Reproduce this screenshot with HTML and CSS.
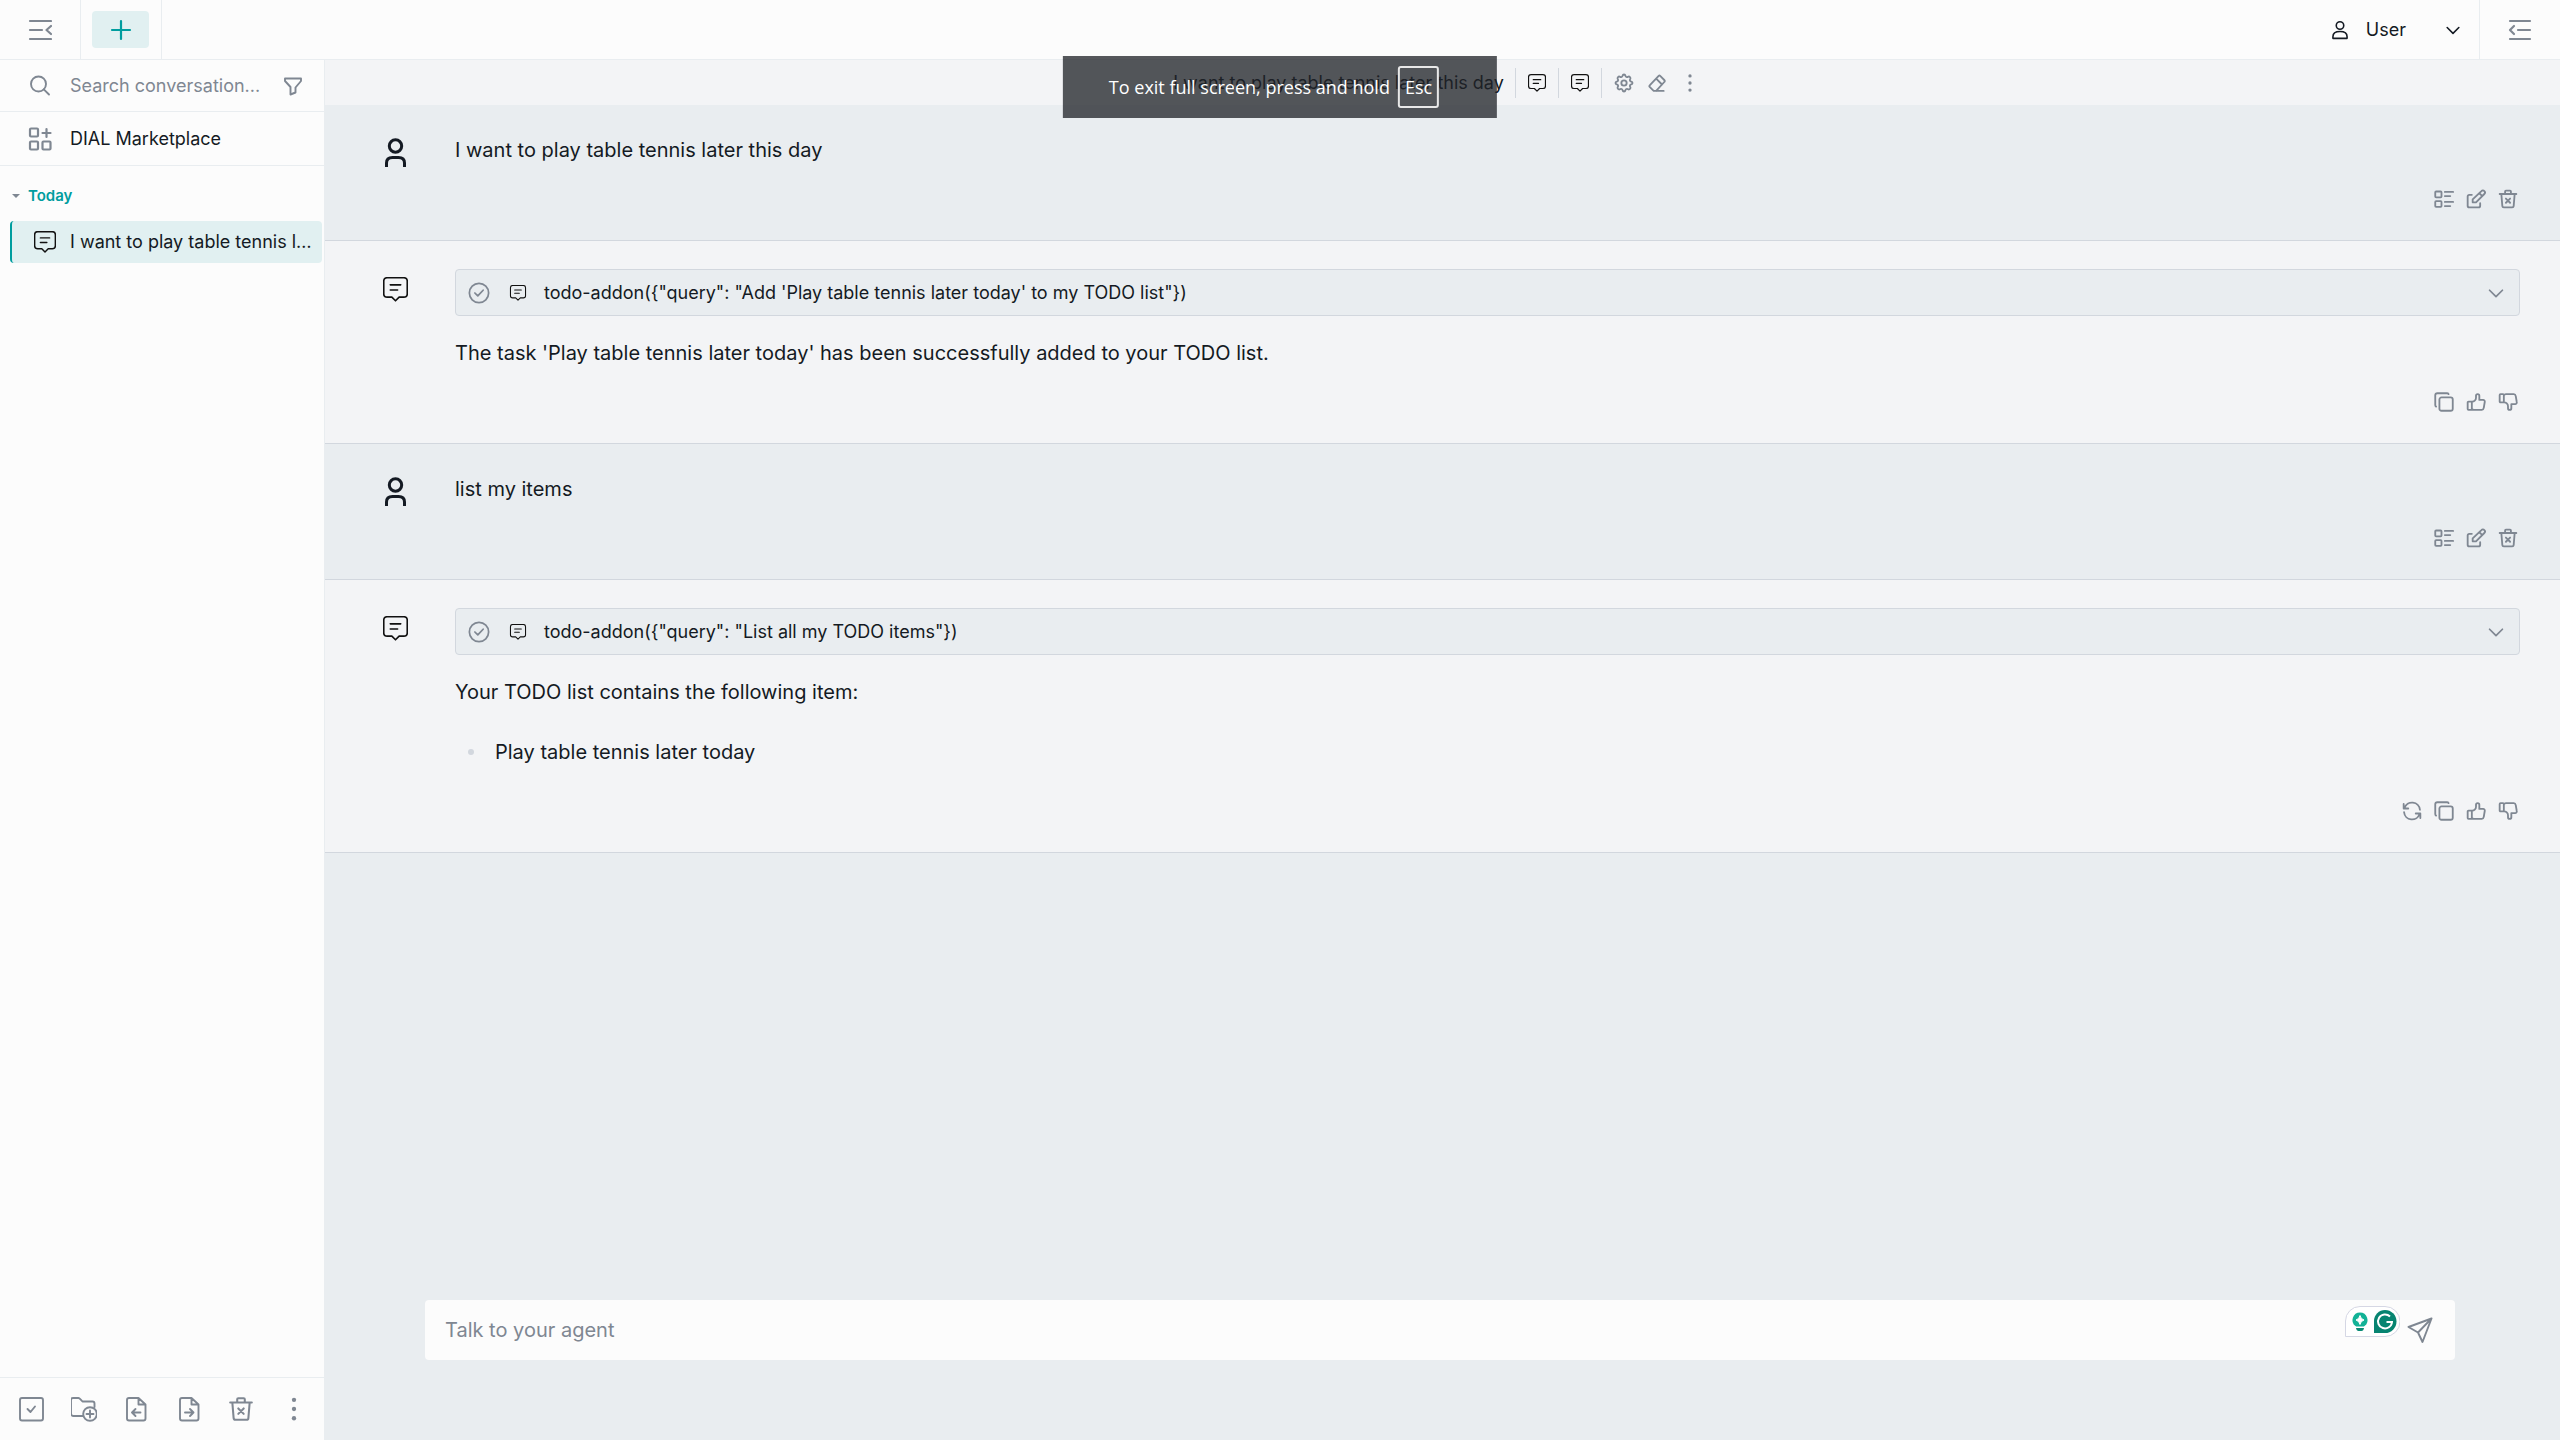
FILE: index.html
```html
<!DOCTYPE html>
<html lang="en">
<head>
<meta charset="utf-8">
<meta name="viewport" content="width=device-width, initial-scale=1">
<title>DIAL chat</title>
<link rel="stylesheet" href="styles.css">
</head>
<body>
<svg class="sprite" aria-hidden="true">
  <symbol id="menu-close" viewBox="0 0 24 24"><path d="M2 3H23M2 12H14M2 21H23M23 8L18.500 12L23 16"/></symbol>
  <symbol id="menu-open" viewBox="0 0 24 24"><path d="M2 3H22M10 12H22M2 21H22M6 8L2 12L6 16"/></symbol>
  <symbol id="plus" viewBox="0 0 24 24"><path d="M12 3V21M3 12H21"/></symbol>
  <symbol id="search" viewBox="0 0 24 24"><circle cx="10.500" cy="10" r="7.500"/><path d="M15.800 15.300L21 20.500"/></symbol>
  <symbol id="filter" viewBox="0 0 24 24"><path d="M4 4.500H20V7L14.500 13.500V18.500L9.500 20.500V13L4 7Z"/></symbol>
  <symbol id="apps" viewBox="0 0 24 24"><rect x="2" y="1.500" width="8" height="8" rx="1"/><rect x="2" y="14.500" width="8" height="8" rx="1"/><rect x="14.500" y="14.500" width="8" height="8" rx="1"/><path d="M18.500 2V10M14.500 6H22.500"/></symbol>
  <symbol id="bot" viewBox="0 0 24 24"><path d="M4 .700H20Q23.300 .700 23.300 4V16Q23.300 19.300 20 19.300H15.500L12 22.800L8.500 19.300H4Q.700 19.300 .700 16V4Q.700 .700 4 .700Z"/><path d="M7 7.500H17M7 12.500H14"/></symbol>
  <symbol id="user" viewBox="0 0 24 24"><circle cx="12" cy="6.500" r="4.500"/><path d="M3.500 22V20C3.500 16 7 13.800 12 13.800S20.500 16 20.500 20V22Z"/></symbol>
  <symbol id="person" viewBox="0 0 22 30"><circle cx="11" cy="8" r="6.200"/><path d="M2 29V25Q2 19.500 8 19.500H14Q20 19.500 20 25V29"/></symbol>
  <symbol id="down" viewBox="0 0 24 24"><path d="M5 9L12 16L19 9"/></symbol>
  <symbol id="gear" viewBox="0 0 24 24"><path d="M10.300 3.300C10.700 1.300 13.300 1.300 13.700 3.300A1.900 1.900 0 0 0 16.800 4.500C18.500 3.500 20.500 5.500 19.500 7.200A1.900 1.900 0 0 0 20.700 10.300C22.700 10.700 22.700 13.300 20.700 13.700A1.900 1.900 0 0 0 19.500 16.800C20.500 18.500 18.500 20.500 16.800 19.500A1.900 1.900 0 0 0 13.700 20.700C13.300 22.700 10.700 22.700 10.300 20.700A1.900 1.900 0 0 0 7.200 19.500C5.500 20.500 3.500 18.500 4.500 16.800A1.900 1.900 0 0 0 3.300 13.700C1.300 13.300 1.300 10.700 3.300 10.300A1.900 1.900 0 0 0 4.500 7.200C3.500 5.500 5.500 3.500 7.200 4.500A1.900 1.900 0 0 0 10.300 3.300Z"/><circle cx="12" cy="12" r="3.200"/></symbol>
  <symbol id="eraser" viewBox="0 0 24 24"><path d="M20 21.500H8L3.200 16.700A1.300 1.300 0 0 1 3.200 14.800L14 3.500A1.300 1.300 0 0 1 15.800 3.500L21 8.700A1.300 1.300 0 0 1 21 10.500L11 21.500M18 13.800L11 6.800"/></symbol>
  <symbol id="dots" viewBox="0 0 24 24"><g fill="currentColor" stroke="none"><circle cx="12" cy="3.500" r="2"/><circle cx="12" cy="12" r="2"/><circle cx="12" cy="20.500" r="2"/></g></symbol>
  <symbol id="list" viewBox="0 0 24 24"><rect x="1.500" y="3" width="7.500" height="7" rx="1"/><rect x="1.500" y="14.500" width="7.500" height="7" rx="1"/><path d="M13 3.500H23M13 8.500H19.500M13 15.500H23M13 20.500H19.500"/></symbol>
  <symbol id="edit" viewBox="0 0 24 24"><path d="M7 7H4A2 2 0 0 0 2 9V20A2 2 0 0 0 4 22H15A2 2 0 0 0 17 20V17"/><path d="M8 16V12.500L18.500 2.500A2.400 2.400 0 0 1 22 6L12 16ZM16 5L19.500 8.500"/></symbol>
  <symbol id="trash" viewBox="0 0 24 24"><path d="M2 6H22M4 6L5.200 20.500Q5.300 22 7 22H17Q18.700 22 18.800 20.500L20 6M8.500 6V3Q8.500 2 9.500 2H14.500Q15.500 2 15.500 3V6M9.500 11.500L14.500 16.500M14.500 11.500L9.500 16.500"/></symbol>
  <symbol id="copy" viewBox="0 0 24 24"><rect x="6.500" y="6.500" width="16" height="16" rx="2.500"/><path d="M2.500 17.500Q1.500 17 1.500 15.500V4Q1.500 1.500 4 1.500H15.500Q17 1.500 17.500 2.500"/></symbol>
  <symbol id="thumb" viewBox="0 0 24 24"><path d="M7 11.500V20.500A1 1 0 0 1 6 21.500H3A1 1 0 0 1 2 20.500V12.500A1 1 0 0 1 3 11.500H7A4.500 4.500 0 0 0 12 7V4.500A2 2 0 0 1 16 4.500V9.500H20.500A2 2 0 0 1 22.500 12L21.300 19Q20.800 21.500 19 21.500H10A3 3 0 0 1 7 20"/></symbol>
  <symbol id="refresh" viewBox="0 0 24 24"><path d="M21.500 10.500A9.500 9.500 0 0 0 3 8.500M2 3.500V9H7.500M2.500 13.500A9.500 9.500 0 0 0 21 15.500M22 20.500V15H16.500"/></symbol>
  <symbol id="check" viewBox="0 0 24 24"><circle cx="12" cy="12" r="10.500"/><path d="M7.500 12L10.700 15.200L16.500 9"/></symbol>
  <symbol id="select" viewBox="0 0 26 26"><rect x="2" y="2" width="23" height="22.500" rx="2"/><path d="M9.500 13L12.500 16L17 10.500"/></symbol>
  <symbol id="folder" viewBox="0 0 26 26"><path d="M12 20H2.500Q0 20 0 17.500V4Q0 2 2 2H7.500Q8.500 2 11.500 5.500H21.500Q23.500 5.500 23.500 7.500V11"/><circle cx="19" cy="18" r="6.800"/><path d="M19 14.500V21.500M15.500 18H22.500"/></symbol>
  <symbol id="import" viewBox="0 0 26 26"><path d="M15.500 2H6Q4 2 4 4V22.500Q4 24.500 6 24.500H20.500Q22.500 24.500 22.500 22.500V8.500L15.500 2V8.500H22.500M17.500 16.500H9.500M12.500 13L9 16.500L12.500 20"/></symbol>
  <symbol id="export" viewBox="0 0 26 26"><path d="M15.500 2H6Q4 2 4 4V22.500Q4 24.500 6 24.500H20.500Q22.500 24.500 22.500 22.500V8.500L15.500 2V8.500H22.500M9 16.500H17.500M14 13L17.500 16.500L14 20"/></symbol>
  <symbol id="send" viewBox="0 0 26 26"><path d="M24.500 1.500L1.500 10L11 15.500L15.500 25ZM24.500 1.500L11 15.500"/></symbol>
</svg>

<header class="topbar">
  <button class="topbar-toggle" type="button" aria-label="Hide conversations"><svg class="icon bold"><use href="#menu-close"/></svg></button>
  <div class="topbar-new"><button class="new-chat" type="button" aria-label="New conversation"><svg class="icon bold"><use href="#plus"/></svg></button></div>
  <button class="account" type="button">
    <svg class="icon small"><use href="#user"/></svg><span class="account-name">User</span><svg class="icon small"><use href="#down"/></svg>
  </button>
  <button class="topbar-toggle end" type="button" aria-label="Show prompts"><svg class="icon bold"><use href="#menu-open"/></svg></button>
</header>

<div class="layout">
  <aside class="sidebar">
    <div class="search-row">
      <label class="search-label" for="search" aria-label="Search conversations"><svg class="icon"><use href="#search"/></svg></label>
      <input class="search-input" id="search" type="text" placeholder="Search conversation...">
      <button type="button" aria-label="Filter"><svg class="icon"><use href="#filter"/></svg></button>
    </div>
    <a class="market" href="#marketplace"><svg class="icon bold"><use href="#apps"/></svg>DIAL Marketplace</a>
    <nav class="history" aria-label="Conversations">
      <h2 class="history-title">Today</h2>
      <a class="conversation" href="#conversation"><svg class="icon bot"><use href="#bot"/></svg><span class="conversation-name">I want to play table tennis later this day</span></a>
    </nav>
    <div class="side-tools">
      <button type="button" aria-label="Select all"><svg class="icon large"><use href="#select"/></svg></button>
      <button type="button" aria-label="New folder"><svg class="icon large"><use href="#folder"/></svg></button>
      <button type="button" aria-label="Import"><svg class="icon large"><use href="#import"/></svg></button>
      <button type="button" aria-label="Export"><svg class="icon large"><use href="#export"/></svg></button>
      <button type="button" aria-label="Delete all"><svg class="icon large"><use href="#trash"/></svg></button>
      <button type="button" aria-label="More"><svg class="icon large"><use href="#dots"/></svg></button>
    </div>
  </aside>

  <main class="chat">
    <div class="chat-head">
      <h1 class="chat-title">I want to play table tennis later this day</h1>
      <button class="head-item" type="button" aria-label="Model"><svg class="icon mini bot"><use href="#bot"/></svg></button>
      <button class="head-item" type="button" aria-label="Addon"><svg class="icon mini bot"><use href="#bot"/></svg></button>
      <div class="head-item head-tools">
        <button type="button" aria-label="Settings"><svg class="icon action"><use href="#gear"/></svg></button>
        <button type="button" aria-label="Clear conversation"><svg class="icon action"><use href="#eraser"/></svg></button>
        <button type="button" aria-label="More"><svg class="icon small"><use href="#dots"/></svg></button>
      </div>
    </div>

    <article class="message">
      <svg class="avatar person"><use href="#person"/></svg>
      <div class="message-body">
        <p class="text">I want to play table tennis later this day</p>
        <div class="actions">
          <button type="button" aria-label="Template"><svg class="icon action"><use href="#list"/></svg></button>
          <button type="button" aria-label="Edit"><svg class="icon action"><use href="#edit"/></svg></button>
          <button type="button" aria-label="Delete"><svg class="icon action"><use href="#trash"/></svg></button>
        </div>
      </div>
    </article>

    <article class="message reply">
      <svg class="avatar bot"><use href="#bot"/></svg>
      <div class="message-body">
        <button class="stage" type="button"><svg class="icon"><use href="#check"/></svg><svg class="icon stage-bot bot"><use href="#bot"/></svg><span class="stage-name">todo-addon({"query": "Add 'Play table tennis later today' to my TODO list"})</span><svg class="icon"><use href="#down"/></svg></button>
        <p class="text">The task 'Play table tennis later today' has been successfully added to your TODO list.</p>
        <div class="actions">
          <button type="button" aria-label="Copy"><svg class="icon action"><use href="#copy"/></svg></button>
          <button type="button" aria-label="Like"><svg class="icon action"><use href="#thumb"/></svg></button>
          <button type="button" aria-label="Dislike"><svg class="icon action flip"><use href="#thumb"/></svg></button>
        </div>
      </div>
    </article>

    <article class="message">
      <svg class="avatar person"><use href="#person"/></svg>
      <div class="message-body">
        <p class="text">list my items</p>
        <div class="actions">
          <button type="button" aria-label="Template"><svg class="icon action"><use href="#list"/></svg></button>
          <button type="button" aria-label="Edit"><svg class="icon action"><use href="#edit"/></svg></button>
          <button type="button" aria-label="Delete"><svg class="icon action"><use href="#trash"/></svg></button>
        </div>
      </div>
    </article>

    <article class="message reply">
      <svg class="avatar bot"><use href="#bot"/></svg>
      <div class="message-body">
        <button class="stage" type="button"><svg class="icon"><use href="#check"/></svg><svg class="icon stage-bot bot"><use href="#bot"/></svg><span class="stage-name">todo-addon({"query": "List all my TODO items"})</span><svg class="icon"><use href="#down"/></svg></button>
        <p class="text">Your TODO list contains the following item:</p>
        <ul class="items"><li>Play table tennis later today</li></ul>
        <div class="actions">
          <button type="button" aria-label="Regenerate"><svg class="icon action"><use href="#refresh"/></svg></button>
          <button type="button" aria-label="Copy"><svg class="icon action"><use href="#copy"/></svg></button>
          <button type="button" aria-label="Like"><svg class="icon action"><use href="#thumb"/></svg></button>
          <button type="button" aria-label="Dislike"><svg class="icon action flip"><use href="#thumb"/></svg></button>
        </div>
      </div>
    </article>

    <form class="composer">
      <input class="composer-input" type="text" placeholder="Talk to your agent" aria-label="Message">
      <button class="writing-aid" type="button" aria-label="Writing assistant">
        <svg width="55" height="31" viewBox="0 0 55 31">
          <path d="M.500 30.500V15A14.500 14.500 0 0 1 15 .500H40A15 15 0 0 1 40 30.500Z" fill="#fff" stroke="#d5d7e4"/>
          <path d="M15 6.500A7.500 7.500 0 0 0 10.500 20Q11 20.500 12 20.500H18Q19 20.500 19.500 20A7.500 7.500 0 0 0 15 6.500Z" fill="#12b296"/>
          <path d="M11 22H19Q18.500 25 16.500 25H13.500Q11.500 25 11 22Z" fill="#078b73"/>
          <path d="M15 9.500Q15.700 13 19 14Q15.700 15 15 18.500Q14.300 15 11 14Q14.300 13 15 9.500Z" fill="#fff" stroke="#fff"/>
          <path d="M40 4A11.200 11.200 0 0 1 40 27H29V15A11 11 0 0 1 40 4Z" fill="#078471"/>
          <path d="M45 10.500A7 7 0 1 0 47 16H41.500" fill="none" stroke="#fff" stroke-width="2"/>
        </svg>
      </button>
      <button type="submit" aria-label="Send"><svg class="icon large"><use href="#send"/></svg></button>
    </form>
  </main>
</div>

<div class="fullscreen-note" role="status">To exit full screen, press and hold <kbd class="key">Esc</kbd></div>
</body>
</html>
```
FILE: styles.css
```css
:root {
  --surface: #fcfcfc;
  --panel: #f3f4f6;
  --base: #e9edf0;
  --line: #d2d7de;
  --text: #141a23;
  --muted: #7f8792;
  --accent: #009d9f;
  --accent-soft: #e1f0f1;
}

* { box-sizing: border-box; }

body {
  display: flex;
  flex-direction: column;
  min-height: 100vh;
  margin: 0;
  background: var(--base);
  color: var(--text);
  font: 18px/24px Inter, "Liberation Sans", sans-serif;
}

h1, h2, p, ul { margin: 0; padding: 0; }
a { color: inherit; text-decoration: none; }

button {
  display: flex;
  align-items: center;
  padding: 0;
  border: 0;
  background: none;
  color: var(--muted);
  font: inherit;
  cursor: pointer;
}

input {
  min-width: 0;
  padding: 0;
  border: 0;
  outline: 0;
  background: none;
  color: var(--text);
  font: inherit;
}

input::placeholder { color: var(--muted); opacity: 1; }

.sprite { position: absolute; width: 0; height: 0; }

.icon {
  flex: none;
  width: 24px;
  height: 24px;
  color: var(--muted);
}

.icon, .avatar {
  display: block;
  overflow: visible;
  fill: none;
  stroke: currentColor;
  stroke-width: 1.9;
  stroke-linecap: round;
  stroke-linejoin: round;
}

.icon.bold { stroke-width: 2.2; }
.icon.large { width: 26px; height: 26px; }
.icon.action { width: 20px; height: 20px; stroke-width: 2.2; }
.icon.small { width: 20px; height: 20px; }
.icon.mini { width: 18px; height: 20px; }
.icon.flip { transform: scaleY(-1); }
.icon.bot, .avatar.bot { color: #111; stroke-width: 1.6; }

/* Top bar */
.topbar {
  display: flex;
  align-items: stretch;
  height: 60px;
  border-bottom: 1px solid var(--base);
  background: var(--surface);
}

.topbar-toggle {
  justify-content: center;
  width: 81px;
  border-right: 1px solid var(--base);
}

.topbar-toggle.end { border-right: 0; border-left: 1px solid var(--base); }

.topbar-new {
  display: flex;
  align-items: center;
  padding: 0 12px 0 11px;
  border-right: 1px solid var(--base);
}

.new-chat {
  justify-content: center;
  width: 57px;
  height: 37px;
  border-radius: 4px;
  background: var(--accent-soft);
}

.new-chat .icon { color: var(--accent); }

.account { margin-left: auto; padding-right: 16px; color: var(--text); }
.account .icon { color: var(--text); }
.account-name { margin: 0 37px 0 16px; }

.layout { display: flex; flex: 1; }

/* Sidebar */
.sidebar {
  display: flex;
  flex: none;
  flex-direction: column;
  width: 325px;
  border-right: 1px solid var(--base);
  background: var(--surface);
}

.search-row, .market {
  display: flex;
  align-items: center;
  gap: 18px;
  height: 52px;
  padding: 0 19px 0 28px;
  border-bottom: 1px solid var(--base);
}

.market { height: 54px; }
.search-input { flex: 1; }
.history { flex: 1; padding: 18px 2px 0 10px; }

.history-title {
  display: flex;
  align-items: center;
  gap: 8px;
  margin-bottom: 13px;
  padding-left: 2px;
  color: var(--accent);
  font-size: 15px;
  font-weight: 600;
  line-height: 24px;
}

.history-title::before {
  border: 4px solid transparent;
  border-top-color: var(--muted);
  border-bottom: 0;
  content: "";
}

.conversation {
  display: flex;
  align-items: center;
  gap: 14px;
  height: 42px;
  padding: 0 8px 0 22px;
  border-left: 2px solid var(--accent);
  border-radius: 4px;
  background: var(--accent-soft);
}

.conversation .icon { width: 22px; height: 22px; }

.conversation-name {
  flex: 1;
  overflow: hidden;
  text-overflow: ellipsis;
  white-space: nowrap;
}

.side-tools {
  display: flex;
  align-items: center;
  justify-content: space-between;
  height: 63px;
  padding: 0 17px 0 18px;
  border-top: 1px solid var(--base);
}

/* Conversation */
.chat { display: flex; flex: 1; flex-direction: column; min-width: 0; }

.chat-head {
  display: flex;
  align-items: center;
  justify-content: center;
  height: 45px;
  padding-right: 12px;
  background: var(--panel);
}

.chat-title { padding-right: 11px; font-size: 18px; font-weight: 400; }

.head-item {
  display: flex;
  align-items: center;
  height: 30px;
  padding: 0 12px;
  border-left: 1px solid var(--line);
}

.head-tools { gap: 13px; padding-right: 0; }

.message {
  display: flex;
  gap: 47px;
  padding: 28px 40px 28px 58px;
  border-bottom: 1px solid var(--line);
}

.message.reply { background: var(--panel); }
.avatar { flex: none; width: 25px; height: 25px; margin-top: 8px; }
.avatar.person { height: 30px; margin-top: 5px; stroke-width: 3; stroke-linecap: butt; }
.message-body { flex: 1; min-width: 0; }
.text, .items { font-size: 20px; line-height: 34px; }

.stage {
  width: 100%;
  height: 47px;
  margin-bottom: 20px;
  padding: 0 12px;
  border: 1px solid var(--line);
  border-radius: 4px;
  background: var(--base);
  color: var(--text);
  text-align: left;
}

.stage-name { flex: 1; }
.stage .icon { width: 22px; height: 22px; }
.stage .stage-bot { width: 18px; height: 16px; margin: 0 17px 0 19px; }

.items { padding: 26px 0 10px 40px; list-style: none; }
.items li { display: flex; align-items: center; }

.items li::before {
  width: 6px;
  height: 6px;
  margin: 0 21px 0 -27px;
  border-radius: 50%;
  background: var(--line);
  content: "";
}

.actions {
  display: flex;
  align-items: center;
  justify-content: flex-end;
  gap: 12px;
  height: 26px;
  margin-top: 19px;
  padding-right: 2px;
}

.composer {
  display: flex;
  align-items: center;
  height: 60px;
  margin: auto 105px 80px 100px;
  padding: 0 22px 0 20px;
  border-radius: 4px;
  background: var(--surface);
}

.composer-input { flex: 1; font-size: 20px; }
.writing-aid { align-self: flex-start; padding: 6px 7px 0 0; }

/* Browser notice over the page */
.fullscreen-note {
  position: absolute;
  top: 56px;
  left: 50%;
  display: flex;
  align-items: center;
  gap: 8px;
  height: 62px;
  padding: 0 58px 0 46px;
  background: rgba(32, 34, 40, .76);
  color: #fff;
  font: 18px/24px "Open Sans", "Noto Sans", sans-serif;
  white-space: nowrap;
  transform: translateX(-50%);
}

.key {
  padding: 7px 5px;
  border: 2px solid #e8e8e8;
  border-radius: 3px;
  font: inherit;
}
```
